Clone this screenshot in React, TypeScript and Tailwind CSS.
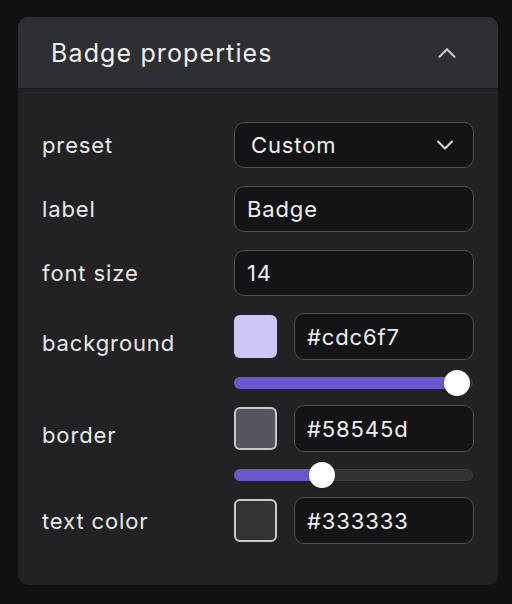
import { ChevronDown, ChevronUp } from 'lucide-react'

const font = { fontFamily: 'Inter, "Noto Sans", sans-serif' }

function Label({ children, className = '' }: { children: string; className?: string }) {
  return <div className={`w-[192px] shrink-0 text-[22px] tracking-[0.04em] text-[#e8e8ea] ${className}`}>{children}</div>
}

function TextBox({ value, className = '' }: { value: string; className?: string }) {
  return (
    <div className={`flex h-[46px] items-center rounded-[10px] border-[1.5px] border-[#505054] bg-[#141416] px-3 pt-px text-[22px] tracking-[0.04em] text-[#efeff1] ${className}`}>
      {value}
    </div>
  )
}

function Swatch({ color }: { color: string }) {
  return <div className="h-[43px] w-[43px] shrink-0 rounded-[6px] border-2 border-[#c9c9cc]" style={{ backgroundColor: color }} />
}

function Slider({ value }: { value: number }) {
  const center = 13 + value * 213
  return (
    <div className="relative h-3 w-[239px] rounded-full border border-[#3c3c40] bg-[#313134]">
      <div className="absolute -left-px -top-px h-3 rounded-full bg-[#6a58cf]" style={{ width: center + 1 }} />
      <div className="absolute -top-[8px] h-[26px] w-[26px] rounded-full bg-white shadow" style={{ left: center - 14 }} />
    </div>
  )
}

export default function App() {
  return (
    <div className="min-h-screen bg-[#111112] px-[18px] pt-[17px] pb-[19px]" style={font}>
      <div className="w-[480px] overflow-hidden rounded-[10px] bg-[#222224]">
        <div className="flex h-[72px] items-center justify-between border-b border-[#18181a] bg-[#2e2f33] pl-[33px] pr-[36px]">
          <span className="pt-[3px] text-[25px] tracking-[0.045em] text-[#f0f0f2]">Badge properties</span>
          <ChevronUp size={30} strokeWidth={1.7} className="text-[#c9c9cc]" />
        </div>
        <div className="flex flex-col px-6 pt-[33px] pb-[41px]">
          <div className="flex items-center">
            <Label className="pt-px">preset</Label>
            <div className="flex h-[46px] flex-1 items-center justify-between rounded-[10px] border-[1.5px] border-[#505054] bg-[#141416] pl-4 pr-[14px] text-[22px] tracking-[0.04em] text-[#efeff1]">
              <span className="pt-px">Custom</span>
              <ChevronDown size={28} strokeWidth={1.7} className="text-[#dcdcde]" />
            </div>
          </div>
          <div className="mt-[18px] flex items-center">
            <Label className="pt-px">label</Label>
            <TextBox value="Badge" className="flex-1" />
          </div>
          <div className="mt-[18px] flex items-center">
            <Label className="pt-px">font size</Label>
            <TextBox value="14" className="flex-1" />
          </div>
          <div className="mt-[17px] flex items-start">
            <Label className="pt-[14px]">background</Label>
            <div className="flex flex-1 flex-col">
              <div className="flex items-center gap-[17px]">
                <div className="h-[43px] w-[43px] shrink-0 rounded-[6px] bg-[#cdc6f7]" />
                <TextBox value="#cdc6f7" className="h-[47px] flex-1" />
              </div>
              <div className="mt-[17px]">
                <Slider value={0.985} />
              </div>
            </div>
          </div>
          <div className="mt-[16px] flex items-start">
            <Label className="pt-[14px]">border</Label>
            <div className="flex flex-1 flex-col">
              <div className="flex items-center gap-[17px]">
                <Swatch color="#58545d" />
                <TextBox value="#58545d" className="h-[47px] flex-1" />
              </div>
              <div className="mt-[17px]">
                <Slider value={0.352} />
              </div>
            </div>
          </div>
          <div className="mt-[16px] flex items-center">
            <Label className="pt-px">text color</Label>
            <div className="flex flex-1 items-center gap-[17px]">
              <Swatch color="#333333" />
              <TextBox value="#333333" className="h-[47px] flex-1" />
            </div>
          </div>
        </div>
      </div>
    </div>
  )
}
